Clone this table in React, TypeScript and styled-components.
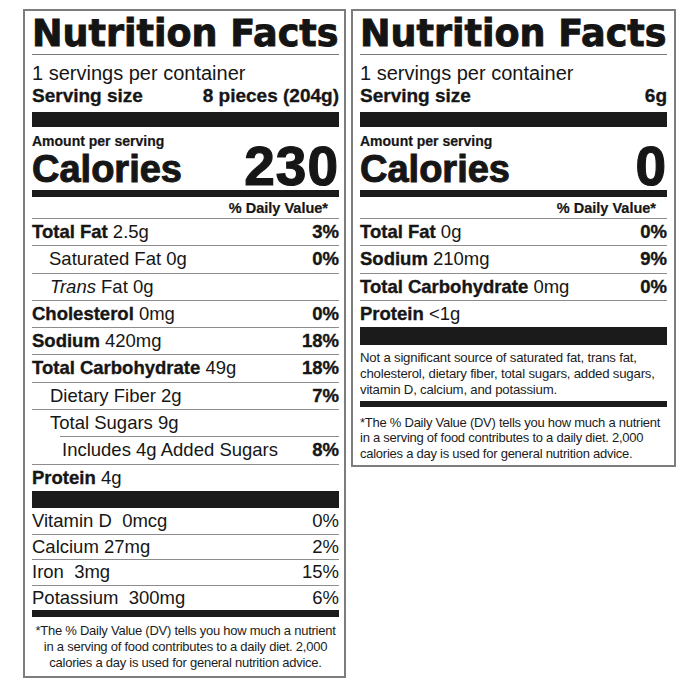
import React from 'react';
import styled, { createGlobalStyle } from 'styled-components';

const Global = createGlobalStyle`
  html, body { margin: 0; padding: 0; background: #fff; }
  body { font-family: "Liberation Sans", Arial, sans-serif; color: #161616; }
`;

const Page = styled.div`
  display: flex;
  align-items: flex-start;
  gap: 5px;
  padding: 9px 0 0 23px;
`;

const Label = styled.section<{ $width: number; $padL: number; $padR: number }>`
  width: ${(p) => p.$width}px;
  box-sizing: border-box;
  border: 2px solid #7d7d7d;
  padding: 0 ${(p) => p.$padR}px 0 ${(p) => p.$padL}px;
  background: #fff;
`;

const Title = styled.h1`
  margin: 0;
  padding-top: 3px;
  font-family: "DejaVu Sans", sans-serif;
  font-weight: 700;
  font-size: 36.5px;
  line-height: 40px;
  white-space: nowrap;
  border-bottom: 1px solid #7a7a7a;
  color: #141414;
  -webkit-text-stroke: 0.9px #141414;
`;

const Servings = styled.div`
  padding-top: 6px;
  font-size: 20px;
  line-height: 24px;
  white-space: nowrap;
`;

const ServingSize = styled.div`
  display: flex;
  justify-content: space-between;
  font-weight: 700;
  font-size: 19px;
  line-height: 22px;
  -webkit-text-stroke: 0.3px #161616;
`;

const Bar = styled.div<{ $h: number; $mt?: number }>`
  height: ${(p) => p.$h}px;
  margin-top: ${(p) => p.$mt ?? 0}px;
  background: #1b1b1b;
`;

const CaloriesBlock = styled.div`
  display: flex;
  justify-content: space-between;
  align-items: flex-end;
  padding-top: 5.5px;
`;

const CaloriesLeft = styled.div`
  display: flex;
  flex-direction: column;
`;

const Amount = styled.div`
  font-weight: 700;
  font-size: 14px;
  line-height: 16px;
  -webkit-text-stroke: 0.2px #161616;
`;

const CaloriesWord = styled.div`
  font-weight: 700;
  font-size: 38px;
  line-height: 41.5px;
  -webkit-text-stroke: 1px #161616;
`;

const CaloriesNumber = styled.div`
  font-weight: 700;
  font-size: 55px;
  line-height: 47.5px;
  letter-spacing: 1px;
  -webkit-text-stroke: 1.2px #161616;
`;

const DVHeader = styled.div`
  text-align: right;
  padding: 1px 11px 0 0;
  font-weight: 700;
  font-size: 14.5px;
  line-height: 20px;
  -webkit-text-stroke: 0.2px #161616;
`;

const Row = styled.div<{ $indent?: number; $inset?: number; $first?: boolean; $lh: number }>`
  display: flex;
  justify-content: space-between;
  border-top: ${(p) => (p.$first ? 'none' : '1px solid #8c8c8c')};
  margin-left: ${(p) => p.$inset ?? 0}px;
  padding-left: ${(p) => p.$indent ?? 0}px;
  font-size: 18.5px;
  line-height: ${(p) => p.$lh}px;
  white-space: nowrap;
`;

const Name = styled.b`
  font-weight: 700;
  -webkit-text-stroke: 0.35px #161616;
`;

const Pct = styled.span<{ $bold?: boolean }>`
  font-weight: ${(p) => (p.$bold ? 700 : 400)};
  -webkit-text-stroke: ${(p) => (p.$bold ? '0.35px #161616' : '0')};
`;

const Note = styled.div<{ $center?: boolean; $size: number; $lh: number; $pt: number; $pb: number; $ls: number }>`
  padding: ${(p) => p.$pt}px 0 ${(p) => p.$pb}px;
  font-size: ${(p) => p.$size}px;
  line-height: ${(p) => p.$lh}px;
  letter-spacing: ${(p) => p.$ls}px;
  text-align: ${(p) => (p.$center ? 'center' : 'left')};
  color: #1c1c1c;
`;

const Line = styled.span`
  display: block;
  white-space: nowrap;
`;

type Nutrient = {
  name: React.ReactNode;
  amount: string;
  pct?: string;
  bold?: boolean;
  indent?: number;
  inset?: number;
};

const NutrientRow = ({ n }: { n: Nutrient }) => (
  <Row $indent={n.indent} $inset={n.inset} $lh={26.3}>
    <span>
      {n.bold ? <Name>{n.name}</Name> : n.name} {n.amount}
    </span>
    {n.pct ? <Pct $bold>{n.pct}</Pct> : null}
  </Row>
);

const footnoteLines = [
  '*The % Daily Value (DV) tells you how much a nutrient',
  'in a serving of food contributes to a daily diet. 2,000',
  'calories a day is used for general nutrition advice.',
];

const Header = ({ size, calories }: { size: string; calories: string }) => (
  <>
    <Title>Nutrition Facts</Title>
    <Servings>1 servings per container</Servings>
    <ServingSize>
      <span>Serving size</span>
      <span>{size}</span>
    </ServingSize>
    <Bar $h={15} $mt={5} />
    <CaloriesBlock>
      <CaloriesLeft>
        <Amount>Amount per serving</Amount>
        <CaloriesWord>Calories</CaloriesWord>
      </CaloriesLeft>
      <CaloriesNumber>{calories}</CaloriesNumber>
    </CaloriesBlock>
    <Bar $h={7} />
    <DVHeader>% Daily Value*</DVHeader>
  </>
);

const leftNutrients: Nutrient[] = [
  { name: 'Total Fat', amount: '2.5g', pct: '3%', bold: true },
  { name: 'Saturated Fat', amount: '0g', pct: '0%', indent: 17 },
  { name: <><i>Trans</i> Fat</>, amount: '0g', indent: 18 },
  { name: 'Cholesterol', amount: '0mg', pct: '0%', bold: true },
  { name: 'Sodium', amount: '420mg', pct: '18%', bold: true },
  { name: 'Total Carbohydrate', amount: '49g', pct: '18%', bold: true },
  { name: 'Dietary Fiber', amount: '2g', pct: '7%', indent: 18 },
  { name: 'Total Sugars', amount: '9g', indent: 18 },
  { name: 'Includes 4g Added Sugars', amount: '', pct: '8%', inset: 28, indent: 2 },
  { name: 'Protein', amount: '4g', bold: true },
];

const vitamins = [
  { name: 'Vitamin D\u00a0 0mcg', pct: '0%' },
  { name: 'Calcium 27mg', pct: '2%' },
  { name: 'Iron\u00a0 3mg', pct: '15%' },
  { name: 'Potassium\u00a0 300mg', pct: '6%' },
];

const rightNutrients: Nutrient[] = [
  { name: 'Total Fat', amount: '0g', pct: '0%', bold: true },
  { name: 'Sodium', amount: '210mg', pct: '9%', bold: true },
  { name: 'Total Carbohydrate', amount: '0mg', pct: '0%', bold: true },
  { name: 'Protein', amount: '<1g', bold: true },
];

export default function App() {
  return (
    <>
      <Global />
      <Page>
        <Label $width={323} $padL={7} $padR={5}>
          <Header size="8 pieces (204g)" calories="230" />
          {leftNutrients.map((n, i) => (
            <NutrientRow key={i} n={n} />
          ))}
          <Bar $h={17} />
          {vitamins.map((v, i) => (
            <Row key={v.name} $first={i === 0} $lh={i === 0 ? 26 : 24.5}>
              <span>{v.name}</span>
              <Pct>{v.pct}</Pct>
            </Row>
          ))}
          <Bar $h={7} />
          <Note $center $size={13} $lh={16} $pt={6} $pb={5} $ls={-0.25}>
            {footnoteLines.map((l) => (
              <Line key={l}>{l}</Line>
            ))}
          </Note>
        </Label>
        <Label $width={325} $padL={7} $padR={7}>
          <Header size="6g" calories="0" />
          {rightNutrients.map((n, i) => (
            <NutrientRow key={i} n={n} />
          ))}
          <Bar $h={18} />
          <Note $size={13.2} $lh={16} $pt={5} $pb={0} $ls={-0.2}>
            <Line>Not a significant source of saturated fat, trans fat,</Line>
            <Line>cholesterol, dietary fiber, total sugars, added sugars,</Line>
            <Line>vitamin D, calcium, and potassium.</Line>
          </Note>
          <Bar $h={6} $mt={3} />
          <Note $size={13} $lh={15.3} $pt={8} $pb={4} $ls={-0.25}>
            {footnoteLines.map((l) => (
              <Line key={l}>{l}</Line>
            ))}
          </Note>
        </Label>
      </Page>
    </>
  );
}
